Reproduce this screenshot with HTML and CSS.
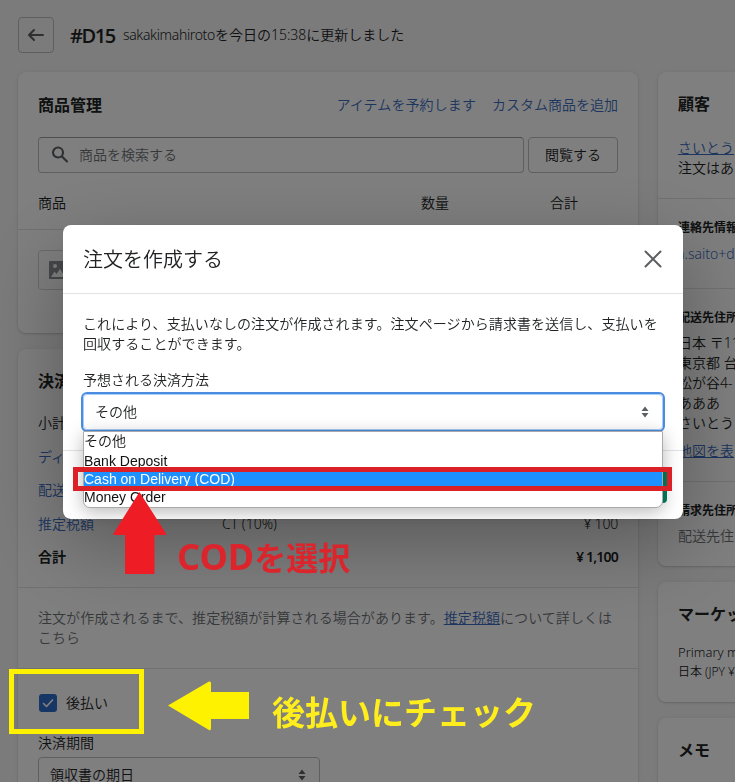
FILE: index.html
```html
<!DOCTYPE html>
<html lang="ja">
<head>
<meta charset="utf-8">
<title>#D15</title>
<link rel="stylesheet" href="styles.css">
</head>
<body>
<div class="page">
  <header class="page-header">
    <button class="back" aria-label="戻る"><svg width="20" height="20" viewBox="0 0 20 20" fill="none" stroke="#5c5f62" stroke-width="2" stroke-linecap="round" stroke-linejoin="round"><path d="M17 10H3.2M8 5L3 10l5 5"/></svg></button>
    <h1>#D15</h1>
    <span class="updated"><span class="user">sakakimahiroto</span>を今日の15:38に更新しました</span>
  </header>
  <div class="columns">
    <main class="main">
      <section class="card products">
        <div class="card-head">
          <h2>商品管理</h2>
          <div class="links"><a>アイテムを予約します</a><a>カスタム商品を追加</a></div>
        </div>
        <div class="search-row">
          <div class="search"><svg width="20" height="20" viewBox="0 0 20 20" fill="none" stroke="#5c5f62" stroke-width="2.1" stroke-linecap="round"><circle cx="7" cy="7.500" r="5"/><path d="M11 11.500l5 5"/></svg><span>商品を検索する</span></div>
          <button class="browse">閲覧する</button>
        </div>
        <div class="table-head"><span>商品</span><span>数量</span><span>合計</span></div>
        <div class="product-row"><div class="thumb"><svg width="20" height="20" viewBox="0 0 20 20"><path fill="#8c9196" fill-rule="evenodd" d="M2 1h16a1 1 0 0 1 1 1v16a1 1 0 0 1-1 1H2a1 1 0 0 1-1-1V2a1 1 0 0 1 1-1zM3 17h14l-5-8-3.500 5-2-2.500zM7 4a2 2 0 1 0 0 4 2 2 0 0 0 0-4z"/></svg></div></div>
      </section>
      <section class="card payment">
        <h2>決済</h2>
        <div class="totals">
          <div><span>小計</span></div>
          <div><a>ディ</a></div>
          <div><a>配送</a></div>
          <div><a>推定税額</a><span>CT (10%)</span><span class="amount">¥ 100</span></div>
          <div class="sum"><span>合計</span><span></span><span class="amount">¥ 1,100</span></div>
        </div>
        <p class="note">注文が作成されるまで、推定税額が計算される場合があります。<a class="underlined">推定税額</a>について詳しくはこちら</p>
        <div class="terms">
          <label class="check"><span class="box"><svg width="18" height="18" viewBox="0 0 18 18" fill="none" stroke="#fff" stroke-width="1.700" stroke-linecap="round" stroke-linejoin="round"><path d="M4.500 9.500l3 3 6-6.500"/></svg></span>後払い</label>
          <div class="term-label">決済期間</div>
          <div class="term-select"><span>領収書の期日</span><svg class="sort" width="8" height="12" viewBox="0 0 8 12" fill="#5c5f62"><path d="M4 .500L7.500 5h-7zM4 11.500L.5 7h7z"/></svg></div>
        </div>
      </section>
    </main>
    <aside class="side">
      <section class="card">
        <div class="customer"><h2>顧客</h2><a class="underlined">さいとう </a><p>注文はあ</p></div>
        <div class="contact"><h3>連絡先情報</h3><a>a.saito+d</a></div>
        <div class="shipping"><h3>配送先住所</h3><p>日本 〒11<br>東京都 台<br>松が谷4-<br>あああ<br>さいとう</p><a class="underlined">地図を表</a></div>
        <div class="billing"><h3>請求先住所</h3><p>配送先住</p></div>
      </section>
      <section class="card market"><h2>マーケット</h2><p>Primary market</p><p class="small">日本 (JPY ¥)</p></section>
      <section class="card memo"><h2>メモ</h2></section>
    </aside>
  </div>
</div>
<div class="backdrop">
  <div class="modal">
    <div class="modal-head"><h2>注文を作成する</h2><svg width="18" height="18" viewBox="0 0 18 18" fill="none" stroke="#5c5f62" stroke-width="2" stroke-linecap="round"><path d="M1.500 1.500l15 15M16.500 1.500l-15 15"/></svg></div>
    <div class="modal-body">
      <p>これにより、支払いなしの注文が作成されます。注文ページから請求書を送信し、支払いを<br>回収することができます。</p>
      <div class="field-label">予想される決済方法</div>
      <div class="select"><span>その他</span><svg class="sort" width="8" height="12" viewBox="0 0 8 12" fill="#5c5f62"><path d="M4 .500L7.500 5h-7zM4 11.500L.5 7h7z"/></svg>
        <div class="options"><div class="other">その他</div><div>Bank Deposit</div><div class="active">Cash on Delivery (COD)</div><div>Money Order</div></div>
      </div>
    </div>
    <div class="modal-foot"><button class="primary" aria-label="注文を作成"></button></div>
  </div>
</div>
<div class="mark red-box"></div>
<svg class="mark red-arrow" width="54" height="82" viewBox="0 0 54 82"><path d="M26.500 0L53 41.500Q53.500 43 52 43H41.500V82H12V43H1Q0 43 .5 41.500z" fill="#ee1c25"/></svg>
<div class="mark red-text"><span>COD</span>を選択</div>
<div class="mark yellow-box"></div>
<svg class="mark yellow-arrow" width="82" height="50" viewBox="0 0 82 50"><path d="M0 24.500L41 .5Q43 0 43 2V11H81V38H43V47Q43 50 41 49z" fill="#fff200"/></svg>
<div class="mark yellow-text">後払いにチェック</div>
</body>
</html>
```
FILE: styles.css
```css
* { box-sizing: border-box; }
html, body { height: 100%; overflow: hidden; }
body { margin: 0; background: #f6f6f7; color: #202223; font: 350 14px/20px "Noto Sans", "Noto Sans CJK JP", sans-serif; }
h1, h2, h3, p { margin: 0; }
h2 { font-size: 16px; line-height: 24px; font-weight: 700; }
h3 { font-size: 12px; line-height: 16px; font-weight: 700; white-space: nowrap; position: relative; top: 1px; }
button { font: inherit; color: inherit; background: transparent; }
a { color: #3a6cbf; }
.underlined { text-decoration: underline; }
.page { width: 735px; height: 782px; overflow: hidden; padding: 17px 0 0 18px; }
.page-header { display: flex; align-items: center; height: 36px; margin-bottom: 19px; }
.back { width: 36px; height: 36px; padding: 0; display: grid; place-items: center; border: 1px solid #babfc3; border-radius: 4px; }
h1 { font-family: "Open Sans", sans-serif; font-size: 20px; line-height: 28px; font-weight: 600; margin-left: 16px; padding-top: 1px; width: 53px; letter-spacing: -1.400px; white-space: nowrap; }
.updated { white-space: nowrap; letter-spacing: 0; }
.user { letter-spacing: -.35px; }
.columns { display: flex; gap: 20px; align-items: flex-start; }
.main { width: 620px; flex: none; }
.side { width: 302px; flex: none; white-space: nowrap; }
.card { background: #fff; border-radius: 8px; box-shadow: 0 0 5px rgba(23,24,24,.05), 0 1px 2px rgba(0,0,0,.15); margin-bottom: 16px; }
.products { height: 261px; padding-top: 21px; }
.card-head { display: flex; justify-content: space-between; align-items: center; padding: 0 20px; height: 24px; }
.links { display: flex; gap: 16px; }
.links a:first-child { letter-spacing: .1px; }
.search-row { display: flex; gap: 4px; padding: 20px 20px 0; }
.search { width: 486px; height: 36px; border: 1px solid #babfc3; border-top-color: #999ea4; border-radius: 4px; display: flex; align-items: center; gap: 8px; padding-left: 12px; color: #6d7175; }
.browse { width: 90px; height: 36px; border: 1px solid #babfc3; border-radius: 4px; padding: 0; }
.table-head { display: grid; grid-template-columns: 383px 129px 1fr; padding: 20px 20px 16px; border-bottom: 1px solid #e1e3e5; }
.product-row { padding: 20px; }
.thumb { width: 40px; height: 40px; border: 1px solid #d2d5d8; border-radius: 4px; display: grid; place-items: center; }
.payment { height: 500px; padding-top: 20px; }
.payment > h2 { padding-left: 20px; }
.totals { padding: 20px 20px 20px; display: grid; gap: 13.500px; border-bottom: 1px solid #e1e3e5; height: 195px; align-content: start; }
.totals > div { display: grid; grid-template-columns: 184px 1fr auto; }
.totals a { white-space: nowrap; }
.sum { font-weight: 600; }
.amount { letter-spacing: -.2px; }
.sum .amount { letter-spacing: -.8px; }
.note { height: 81px; padding: 20px; border-bottom: 1px solid #e1e3e5; color: #6d7175; letter-spacing: .06px; }
.terms { padding: 24px 20px; }
.check { display: flex; align-items: center; gap: 9px; height: 20px; }
.box { width: 18px; height: 18px; margin-left: 1px; border-radius: 3px; background: #2c6ecb; }
.box svg { display: block; }
.term-label { margin: 20px 0 4px; }
.term-select { width: 282px; height: 36px; border: 1px solid #babfc3; border-radius: 4px; padding: 0 13px 0 11px; display: flex; align-items: center; justify-content: space-between; }
.side .card > div { padding: 20px; }
.side .card > div + div { border-top: 1px solid #e1e3e5; }
.side .customer { height: 126px; }
.customer h2 { margin-bottom: 22px; }
.customer a, .shipping a { display: block; line-height: 20px; }
.side .contact { height: 90px; }
.contact h3 { margin-bottom: 9px; }
.contact a { margin-left: -1px; letter-spacing: 0; }
.side .shipping { height: 193px; }
.shipping h3 { margin-bottom: 8px; }
.shipping a { margin-top: 8px; }
.side .billing { height: 85px; color: #6d7175; }
.billing h3 { color: #202223; margin-bottom: 8px; }
.market { height: 120px; padding: 20px; }
.market p:first-of-type { margin-top: 16px; }
.market p { font-size: 13px; }
.market .small { font-size: 12px; }
.memo { height: 100px; padding: 20px; }
.backdrop { position: fixed; inset: 0; background: rgba(0,0,0,.5); }
.modal { width: 620px; height: 294px; margin: 225px 0 0 63px; background: #fff; border-radius: 8px; box-shadow: 0 26px 80px rgba(0,0,0,.3), 0 0 1px rgba(0,0,0,.2); }
.modal-head { display: flex; align-items: center; justify-content: space-between; height: 69px; padding: 0 21px 0 20px; border-bottom: 1px solid #e1e3e5; }
.modal-head h2 { font-size: 20px; line-height: 28px; font-weight: 350; padding-top: 1px; }
.modal-body { height: 157px; padding: 20px 20px 0; border-bottom: 1px solid #e1e3e5; }
.modal-body p { white-space: nowrap; letter-spacing: .08px; }
.field-label { margin: 16px 0 4px; }
.select { position: relative; height: 36px; margin-top: 3px; border: 1px solid #a9cdf7; border-radius: 4px; outline: 2px solid #4a8ce0; outline-offset: 0; display: flex; align-items: center; justify-content: space-between; padding: 0 13px 0 11px; }
.options { position: absolute; left: -1px; top: 36px; width: 580px; height: 77px; background: #fff; border: 1px solid #aaa; border-radius: 1px 1px 7px 7px; box-shadow: 0 4px 18px rgba(0,0,0,.28); font: 14px/18px "Liberation Sans", "Noto Sans CJK JP", sans-serif; color: #111; }
.options div { height: 18px; white-space: nowrap; }
.options .other { height: 20px; line-height: 19px; font-weight: 350; }
.options .active { background: #1e90ff; color: #fff; }
.modal-foot { display: flex; justify-content: flex-end; padding: 16px; }
.primary { width: 108px; height: 36px; border: 0; border-radius: 4px; background: #008060; }
.mark { position: absolute; }
.red-box { left: 73px; top: 467px; width: 599px; height: 24px; border: 5px solid #dc2028; }
.red-arrow { left: 113px; top: 492px; }
.red-text { left: 177px; top: 536px; color: #dc242c; font: 700 32px/40px "Noto Sans CJK JP", sans-serif; white-space: nowrap; }
.red-text span { font-family: "Noto Sans", sans-serif; font-size: 36px; }
.yellow-box { left: 9px; top: 669px; width: 135px; height: 65px; border: 5px solid #fff200; }
.yellow-arrow { left: 168px; top: 681px; }
.yellow-text { left: 272px; top: 691px; color: #ffee1c; font: 700 33px/40px "Noto Sans CJK JP", sans-serif; white-space: nowrap; }
```
